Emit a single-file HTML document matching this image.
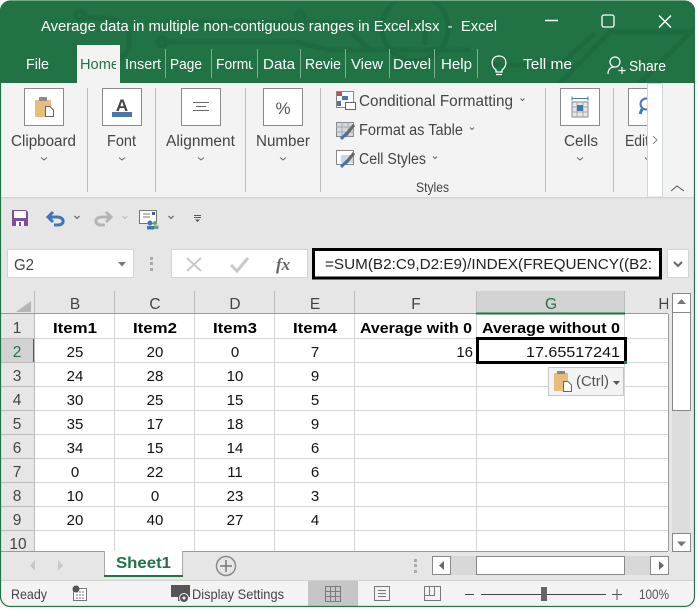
<!DOCTYPE html>
<html><head><meta charset="utf-8"><style>
html,body{margin:0;padding:0;background:#fff;width:700px;height:611px;overflow:hidden}
svg{display:block}
text{font-family:"Liberation Sans",sans-serif;font-size:15px;fill:#333}
.t{fill:#fff;font-size:15px}
.c{fill:#111;font-size:15px;text-anchor:middle}
.b{fill:#000;font-size:15px;font-weight:bold}
.h{fill:#444;font-size:15.5px;text-anchor:middle}
.r{fill:#444;font-size:15.5px;text-anchor:middle}
.l{fill:#444;font-size:15.5px}
</style></head><body>
<svg width="700" height="611" viewBox="0 0 700 611" xmlns="http://www.w3.org/2000/svg">
<defs>
<clipPath id="win"><rect x="0" y="1" width="695" height="606" rx="10"/></clipPath>
<clipPath id="hm"><rect x="77" y="45" width="39" height="38"/></clipPath>
<clipPath id="fm"><rect x="210" y="45" width="43" height="38"/></clipPath>
<clipPath id="ed"><rect x="600" y="83" width="47" height="114"/></clipPath>
<clipPath id="hc"><rect x="624" y="291" width="44" height="23"/></clipPath>
<clipPath id="r10"><rect x="0" y="530" width="34" height="21"/></clipPath>
</defs>
<g clip-path="url(#win)">
<rect width="695" height="607" fill="#e6e6e6"/>
<rect width="695" height="83" fill="#217346"/>
<!-- circuit pattern -->
<g fill="none" stroke="#1f6b41" stroke-width="5">
<path d="M80 18 H110 Q135 25 128 50 Q118 66 92 70"/>
<path d="M165 42 H295 L330 50 H470"/>
<path d="M165 22 H340 L370 50"/>
<circle cx="415" cy="28" r="33"/>
<path d="M400 22 H425 V45"/>
<path d="M560 83 L610 32 H695"/>
<path d="M640 83 L695 28"/>
<path d="M490 65 H560 L595 33"/>
<circle cx="162" cy="42" r="4"/>
<circle cx="80" cy="15" r="4"/>
<circle cx="300" cy="16" r="4"/>
</g>
<!-- title -->
<text class="t" x="41" y="31" textLength="456" lengthAdjust="spacingAndGlyphs" xml:space="preserve">Average data in multiple non-contiguous ranges in Excel.xlsx  -  Excel</text>
<!-- window controls -->
<path d="M545 20.500H558" stroke="#fff" stroke-width="1.500"/>
<rect x="602" y="15" width="12" height="12" rx="2" fill="none" stroke="#fff" stroke-width="1.300"/>
<path d="M659 15.500L671 27.500M671 15.500L659 27.500" stroke="#fff" stroke-width="1.400"/>
<!-- tabs -->
<rect x="77" y="45" width="43" height="38" fill="#f3f3f3"/>
<g font-size="15">
<text class="t" x="26" y="69" textLength="23" lengthAdjust="spacingAndGlyphs">File</text>
<g clip-path="url(#hm)"><text x="80" y="69" textLength="39" lengthAdjust="spacingAndGlyphs" style="fill:#217346">Home</text></g>
<text class="t" x="125" y="69" textLength="36" lengthAdjust="spacingAndGlyphs">Insert</text>
<text class="t" x="170" y="69" textLength="32" lengthAdjust="spacingAndGlyphs">Page</text>
<g clip-path="url(#fm)"><text class="t" x="216" y="69" textLength="40" lengthAdjust="spacingAndGlyphs">Formu</text></g>
<text class="t" x="263" y="69" textLength="32" lengthAdjust="spacingAndGlyphs">Data</text>
<text class="t" x="305" y="69" textLength="36" lengthAdjust="spacingAndGlyphs">Revie</text>
<text class="t" x="351" y="69" textLength="32" lengthAdjust="spacingAndGlyphs">View</text>
<text class="t" x="393" y="69" textLength="38" lengthAdjust="spacingAndGlyphs">Devel</text>
<text class="t" x="441" y="69" textLength="31" lengthAdjust="spacingAndGlyphs">Help</text>
<text class="t" x="523" y="69" textLength="49" lengthAdjust="spacingAndGlyphs">Tell me</text>
<text class="t" x="629" y="71" textLength="37" lengthAdjust="spacingAndGlyphs">Share</text>
</g>
<path d="M165.500 49V78M211.500 49V78M257.500 49V78M300.500 49V78M345.500 49V78M389.500 49V78M434.500 49V78M477.500 49V78" stroke="#7fae94" stroke-width="1"/>
<!-- bulb -->
<path d="M496 70 C490 66 491 56 499 56 C507 56 508 66 502 70 V72 H496 Z M496 74.500H502" fill="none" stroke="#fff" stroke-width="1.300"/>
<!-- person -->
<circle cx="615" cy="62" r="5" fill="none" stroke="#fff" stroke-width="1.200"/>
<path d="M608 74 C608 69 611 67 614 67 M622 67V74M618.500 70.500H625.500" fill="none" stroke="#fff" stroke-width="1.200"/>
<!-- ribbon -->
<rect x="1" y="83" width="693" height="114" fill="#f3f3f3"/>
<rect x="1" y="197" width="693" height="1.500" fill="#d6d6d6"/>
<path d="M87.500 88V192M155.500 88V192M245.500 88V192M320.500 88V192M545.500 88V192M613.500 88V192" stroke="#bdbdbd"/>
<g fill="#fff" stroke="#8a8a8a">
<rect x="24.500" y="88.500" width="39" height="37"/>
<rect x="102.500" y="88.500" width="39" height="37"/>
<rect x="181.500" y="88.500" width="39" height="37"/>
<rect x="263.500" y="88.500" width="39" height="37"/>
<rect x="560.500" y="88.500" width="39" height="37"/>
<rect x="628.500" y="88.500" width="30" height="37"/>
</g>
<!-- clipboard icon -->
<rect x="35" y="100" width="16" height="17" rx="1" fill="#e7bd7c"/>
<rect x="39" y="97" width="8" height="4" fill="#8d8d8d"/>
<path d="M45.500 106.500H50L53.500 110V116.500H45.500Z" fill="#fff" stroke="#666"/>
<!-- font icon -->
<text x="122" y="111" text-anchor="middle" style="font-size:17px;font-weight:bold;fill:#444">A</text>
<rect x="112" y="112" width="20" height="5" fill="#4a76ad"/>
<!-- align icon -->
<path d="M193 102.500H209M196 106.500H206M193 110.500H209" stroke="#666"/>
<!-- percent -->
<text x="283" y="114" text-anchor="middle" style="font-size:17px;fill:#555">%</text>
<!-- cells icon -->
<rect x="572" y="102" width="16" height="15" fill="#e7e7e7" stroke="#888"/>
<path d="M572 107H588M572 112H588M577 102V117M583 102V117" stroke="#aaa"/>
<rect x="577" y="105" width="6" height="6" fill="#3f76b4"/>
<path d="M572 98.500H588M572 96.500V100.500M588 96.500V100.500" stroke="#4a76ad"/>
<!-- edit icon (search) -->
<g clip-path="url(#ed)"><circle cx="646" cy="104" r="5.500" fill="none" stroke="#3f76b4" stroke-width="2"/><path d="M642 109L640 114" stroke="#3f76b4" stroke-width="3"/></g>
<!-- labels -->
<text class="l" x="11" y="146" textLength="65" lengthAdjust="spacingAndGlyphs">Clipboard</text>
<text class="l" x="107" y="146" textLength="29" lengthAdjust="spacingAndGlyphs">Font</text>
<text class="l" x="166" y="146" textLength="69" lengthAdjust="spacingAndGlyphs">Alignment</text>
<text class="l" x="256" y="146" textLength="54" lengthAdjust="spacingAndGlyphs">Number</text>
<text class="l" x="564" y="146" textLength="34" lengthAdjust="spacingAndGlyphs">Cells</text>
<g clip-path="url(#ed)"><text class="l" x="625" y="146" textLength="24" lengthAdjust="spacingAndGlyphs">Edit</text></g>
<g fill="none" stroke="#666" stroke-width="1">
<path d="M41 157.500L44 160L47 157.500M119 157.500L122 160L125 157.500M198 157.500L201 160L204 157.500M280 157.500L283 160L286 157.500M577 157.500L580 160L583 157.500M645 157.500L647 159.500"/>
<path d="M520.500 98.500L522.500 100.500L524.500 98.500M470 127.500L472 129.500L474 127.500M433 156.500L435 158.500L437 156.500"/>
<path d="M671 191L677 186L684 191" stroke="#555"/>
</g>
<!-- styles -->
<text class="l" x="359" y="106" textLength="154" lengthAdjust="spacingAndGlyphs">Conditional Formatting</text>
<text class="l" x="359" y="135" textLength="104" lengthAdjust="spacingAndGlyphs">Format as Table</text>
<text class="l" x="359" y="164" textLength="67" lengthAdjust="spacingAndGlyphs">Cell Styles</text>
<text x="416" y="192" textLength="33" lengthAdjust="spacingAndGlyphs" style="font-size:14px;fill:#444">Styles</text>
<!-- cond fmt icon -->
<rect x="336.500" y="91.500" width="17" height="16" fill="#fff" stroke="#888"/>
<rect x="337" y="92" width="5" height="4" fill="#c0504d"/><rect x="342" y="96" width="6" height="4" fill="#4a76ad"/><rect x="337" y="101" width="4" height="5" fill="#4a76ad"/>
<rect x="345.500" y="102.500" width="10" height="7" fill="#fff" stroke="#666"/>
<!-- format icons -->
<rect x="336.500" y="122.500" width="17" height="14" fill="#d4d9e0" stroke="#888"/>
<path d="M336 127H354M336 132H354M342 122V137M348 122V137" stroke="#aaa"/>
<path d="M345 136L354 125" stroke="#666" stroke-width="3"/><path d="M341 139L347 133" stroke="#3f76b4" stroke-width="3"/>
<rect x="336.500" y="150.500" width="17" height="14" fill="#fff" stroke="#888"/>
<rect x="341" y="155" width="12" height="8" fill="#c9d6e6"/>
<path d="M345 164L354 153" stroke="#666" stroke-width="3"/><path d="M341 167L347 161" stroke="#3f76b4" stroke-width="3"/>
<!-- ribbon white scroll strip -->
<rect x="647.500" y="83.500" width="15" height="113.500" fill="#fff" stroke="#cfd8d3"/>
<path d="M653 136L657 140L653 144" fill="none" stroke="#888"/>
<!-- QAT -->
<path d="M12 210H26L28 212V226H12Z" fill="#7b4f9e"/>
<rect x="14" y="211" width="12" height="7" fill="#fff"/>
<rect x="16" y="221" width="8" height="5" fill="#fff"/><rect x="19" y="222" width="2" height="4" fill="#7b4f9e"/>
<path d="M48 217H57C65 217 65 225 58 225H54M53 212L48 217L53 222" fill="none" stroke="#3f76b4" stroke-width="3"/>
<path d="M111 217H102C94 217 94 225 101 225H105M106 212L111 217L106 222" fill="none" stroke="#b4b4b4" stroke-width="3"/>
<path d="M74.500 216L77 218.500L79.500 216" fill="none" stroke="#555"/>
<path d="M122.500 216L125 218.500L127.500 216" fill="none" stroke="#bbb"/>
<rect x="139.500" y="210.500" width="17" height="13" fill="#fff" stroke="#777"/>
<path d="M143 214H150M143 217H150" stroke="#777"/><rect x="152" y="212" width="3" height="3" fill="#3f5f8f"/>
<circle cx="150" cy="223" r="2.500" fill="#3f76b4"/><rect x="147" y="226" width="7" height="3.500" fill="#3f76b4"/>
<circle cx="155" cy="223" r="2" fill="#6aa383"/><rect x="154" y="225.500" width="4.500" height="3.500" fill="#6aa383"/>
<path d="M168.500 216L171 218.500L173.500 216" fill="none" stroke="#555"/>
<path d="M194 215.500H201M194 217.500H201" stroke="#555"/><path d="M195 219.500H200L197.500 222Z" fill="#555"/>
<!-- formula bar -->
<rect x="7.500" y="249.500" width="126" height="28" fill="#fff" stroke="#d4d4d4"/>
<text x="14" y="270" textLength="20" lengthAdjust="spacingAndGlyphs" style="font-size:15.5px;fill:#444">G2</text>
<path d="M118 262H126L122 266.500Z" fill="#777"/>
<rect x="150" y="257" width="3" height="3" fill="#aaa"/><rect x="150" y="262" width="3" height="3" fill="#aaa"/><rect x="150" y="268" width="3" height="3" fill="#aaa"/>
<rect x="171.500" y="249.500" width="136" height="28" fill="#fff" stroke="#d4d4d4"/>
<path d="M187 258L201 271M201 258L187 271" stroke="#c8c8c8" stroke-width="2"/>
<path d="M231 265L237 271L248 258" fill="none" stroke="#c8c8c8" stroke-width="3"/>
<text x="276" y="270" style="font-family:'Liberation Serif',serif;font-style:italic;font-weight:bold;font-size:17px;fill:#666">fx</text>
<rect x="313.500" y="249.500" width="347" height="28.500" fill="#fff" stroke="#000" stroke-width="3"/>
<text x="325" y="269" textLength="327" lengthAdjust="spacingAndGlyphs" style="font-size:15px;fill:#222">=SUM(B2:C9,D2:E9)/INDEX(FREQUENCY((B2:</text>
<rect x="667.500" y="249.500" width="21" height="28" fill="#fff" stroke="#d4d4d4"/>
<path d="M674 262L678 266L682 262" fill="none" stroke="#666" stroke-width="2"/>
<!-- column headers -->
<rect x="1" y="291" width="667" height="23" fill="#e6e6e6"/>
<rect x="476" y="291" width="149" height="23" fill="#d2d2d2"/>
<rect x="1" y="314" width="34" height="237" fill="#e6e6e6"/>
<rect x="1" y="338" width="34" height="24" fill="#d2d2d2"/>
<rect x="33" y="338" width="2" height="24" fill="#217346"/>
<path d="M31 301V312H16Z" fill="#b5b5b5"/>
<!-- grid -->
<rect x="35" y="314" width="633" height="237" fill="#fff"/>
<g stroke="#d4d4d4" stroke-width="1">
<path d="M35 338.500H668M35 362.500H668M35 386.500H668M35 410.500H668M35 434.500H668M35 458.500H668M35 482.500H668M35 506.500H668M35 530.500H668"/>
<path d="M114.500 314V551M194.500 314V551M274.500 314V551M354.500 314V551M476.500 314V551M624.500 314V551"/>
</g>
<g stroke="#bbb"><path d="M1 338.500H34M1 362.500H34M1 386.500H34M1 410.500H34M1 434.500H34M1 458.500H34M1 482.500H34M1 506.500H34M1 530.500H34"/>
<path d="M34.500 291V551M114.500 291V313M194.500 291V313M274.500 291V313M354.500 291V313M476.500 291V313M624.500 291V313"/></g>
<path d="M1 313.500H668" stroke="#9a9a9a"/>
<rect x="476" y="312.500" width="149" height="2" fill="#217346"/>
<path d="M668.500 314V551" stroke="#9a9a9a"/>
<!-- header labels -->
<text class="h" x="75" y="309">B</text><text class="h" x="155" y="309">C</text><text class="h" x="235" y="309">D</text><text class="h" x="315" y="309">E</text><text class="h" x="416" y="309">F</text>
<text class="h" x="551" y="309" style="fill:#217346">G</text>
<g clip-path="url(#hc)"><text class="h" x="664" y="309">H</text></g>
<text class="r" x="17" y="333">1</text><text class="r" x="17" y="357" style="fill:#217346">2</text><text class="r" x="17" y="381">3</text><text class="r" x="17" y="405">4</text><text class="r" x="17" y="429">5</text><text class="r" x="17" y="453">6</text><text class="r" x="17" y="477">7</text><text class="r" x="17" y="501">8</text><text class="r" x="17" y="525">9</text>
<g clip-path="url(#r10)"><text class="r" x="18" y="549">10</text></g>
<!-- cells -->
<text class="b" x="53" y="333" textLength="44" lengthAdjust="spacingAndGlyphs">Item1</text>
<text class="b" x="133" y="333" textLength="44" lengthAdjust="spacingAndGlyphs">Item2</text>
<text class="b" x="213" y="333" textLength="44" lengthAdjust="spacingAndGlyphs">Item3</text>
<text class="b" x="293" y="333" textLength="44" lengthAdjust="spacingAndGlyphs">Item4</text>
<text class="b" x="360" y="333" textLength="112" lengthAdjust="spacingAndGlyphs">Average with 0</text>
<text class="b" x="482" y="333" textLength="138" lengthAdjust="spacingAndGlyphs">Average without 0</text>
<text class="c" x="75" y="357">25</text><text class="c" x="155" y="357">20</text><text class="c" x="235" y="357">0</text><text class="c" x="315" y="357">7</text>
<text class="c" x="75" y="381">24</text><text class="c" x="155" y="381">28</text><text class="c" x="235" y="381">10</text><text class="c" x="315" y="381">9</text>
<text class="c" x="75" y="405">30</text><text class="c" x="155" y="405">25</text><text class="c" x="235" y="405">15</text><text class="c" x="315" y="405">5</text>
<text class="c" x="75" y="429">35</text><text class="c" x="155" y="429">17</text><text class="c" x="235" y="429">18</text><text class="c" x="315" y="429">9</text>
<text class="c" x="75" y="453">34</text><text class="c" x="155" y="453">15</text><text class="c" x="235" y="453">14</text><text class="c" x="315" y="453">6</text>
<text class="c" x="75" y="477">0</text><text class="c" x="155" y="477">22</text><text class="c" x="235" y="477">11</text><text class="c" x="315" y="477">6</text>
<text class="c" x="75" y="501">10</text><text class="c" x="155" y="501">0</text><text class="c" x="235" y="501">23</text><text class="c" x="315" y="501">3</text>
<text class="c" x="75" y="525">20</text><text class="c" x="155" y="525">40</text><text class="c" x="235" y="525">27</text><text class="c" x="315" y="525">4</text>
<text x="473" y="357" text-anchor="end" style="fill:#111">16</text>
<text x="620" y="357" text-anchor="end" textLength="94" lengthAdjust="spacingAndGlyphs" style="fill:#111">17.65517241</text>
<rect x="477.500" y="338.500" width="148" height="24" fill="none" stroke="#000" stroke-width="3"/>
<rect x="624" y="361" width="3" height="3" fill="#217346"/>
<!-- paste button -->
<rect x="548.500" y="367.500" width="75" height="28" fill="#f3f3f3" stroke="#c6c6c6"/>
<rect x="554" y="373" width="14" height="18" fill="#e7bd7c"/>
<rect x="557" y="371" width="8" height="3" fill="#888"/>
<path d="M563.500 381.500H568L571.500 385V391.500H563.500Z" fill="#fff" stroke="#666"/>
<text x="576" y="386" textLength="33" lengthAdjust="spacingAndGlyphs" style="fill:#555;font-size:14.5px">(Ctrl)</text>
<path d="M613 381H620L616.500 385Z" fill="#555"/>
<!-- v scrollbar -->
<rect x="669" y="291" width="25" height="289" fill="#e6e6e6"/>
<rect x="672" y="312" width="18" height="221" fill="#dcdcdc"/>
<rect x="672.500" y="293.500" width="18" height="19" fill="#fff" stroke="#888"/>
<path d="M677 304H686L681.500 299Z" fill="#777"/>
<rect x="672.500" y="312.500" width="18" height="98" fill="#fff" stroke="#888"/>
<rect x="672.500" y="533.500" width="18" height="18" fill="#fff" stroke="#888"/>
<path d="M677 541.500H686L681.500 546.500Z" fill="#777"/>
<!-- tabs bar -->
<rect x="1" y="552" width="668" height="28" fill="#e6e6e6"/>
<path d="M1 551.500H668" stroke="#9a9a9a"/>
<path d="M35 560L30 565.500L35 571Z" fill="#c8c8c8"/><path d="M58 560L63 565.500L58 571Z" fill="#c8c8c8"/>
<rect x="104.500" y="551" width="78" height="24" fill="#fff"/>
<path d="M104.500 551V576M182.500 551V576" stroke="#aaa"/>
<rect x="104" y="575" width="79" height="2" fill="#217346"/>
<text x="116" y="568" textLength="55" lengthAdjust="spacingAndGlyphs" style="font-weight:bold;font-size:15.500px;fill:#217346">Sheet1</text>
<circle cx="226" cy="566" r="9.500" fill="none" stroke="#8a8a8a" stroke-width="1.500"/>
<path d="M220 566H232M226 560V572" stroke="#777" stroke-width="1.500"/>
<rect x="414" y="559" width="3" height="3" fill="#aaa"/><rect x="414" y="564" width="3" height="3" fill="#aaa"/><rect x="414" y="570" width="3" height="3" fill="#aaa"/>
<rect x="432" y="556" width="236" height="19" fill="#d8d8d8"/>
<rect x="432.500" y="556.500" width="18" height="18" fill="#fff" stroke="#888"/>
<path d="M444 561V570L439 565.500Z" fill="#666"/>
<rect x="476.500" y="556.500" width="148" height="18" fill="#fff" stroke="#888"/>
<rect x="650.500" y="556.500" width="18" height="18" fill="#fff" stroke="#888"/>
<path d="M659 561V570L664 565.500Z" fill="#666"/>
<!-- status bar -->
<rect x="1" y="580" width="693" height="27" fill="#f3f3f3"/>
<path d="M1 580.500H694" stroke="#d0d0d0"/>
<text x="11" y="599" textLength="36" lengthAdjust="spacingAndGlyphs" style="font-size:14px;fill:#444">Ready</text>
<rect x="73.500" y="588.500" width="13" height="12" fill="#fff" stroke="#777"/>
<path d="M76 592H85M76 595H85M76 598H85" stroke="#777" stroke-dasharray="2 1"/>
<circle cx="76" cy="589" r="3.500" fill="#555"/>
<path d="M171 585H190V597H183V601H178V597H171Z" fill="#555"/>
<circle cx="184" cy="598" r="4.500" fill="#555" stroke="#f3f3f3"/><circle cx="184" cy="598" r="1.500" fill="#f3f3f3"/>
<text x="192" y="599" textLength="92" lengthAdjust="spacingAndGlyphs" style="font-size:14px;fill:#444">Display Settings</text>
<rect x="308" y="581" width="50" height="25" fill="#c6c6c6"/>
<g fill="none" stroke="#7a7a7a"><rect x="325.500" y="586.500" width="15" height="15"/><path d="M330.500 586V602M335.500 586V602M325 591.500H341M325 596.500H341"/></g>
<g fill="none" stroke="#777">
<rect x="374.500" y="586.500" width="15" height="14"/><path d="M378 590.500H386M378 593.500H386M378 596.500H386"/>
<rect x="424.500" y="586.500" width="16" height="14"/><path d="M424.500 595.500H434.500V586.500M429.500 586.500V595.500"/>
</g>
<path d="M465 594.500H474M481 594.500H606" stroke="#444" stroke-width="1"/>
<path d="M612 594.500H622M617 589V600" stroke="#555"/>
<rect x="541" y="587" width="6" height="14" fill="#666"/>
<text x="639" y="599" textLength="30" lengthAdjust="spacingAndGlyphs" style="font-size:14px;fill:#555">100%</text>
</g>
<!-- window frame -->
<rect x="0.500" y="1" width="694" height="605.500" rx="10" fill="none" stroke="#217346" stroke-width="1.200"/>
</svg>
</body></html>
